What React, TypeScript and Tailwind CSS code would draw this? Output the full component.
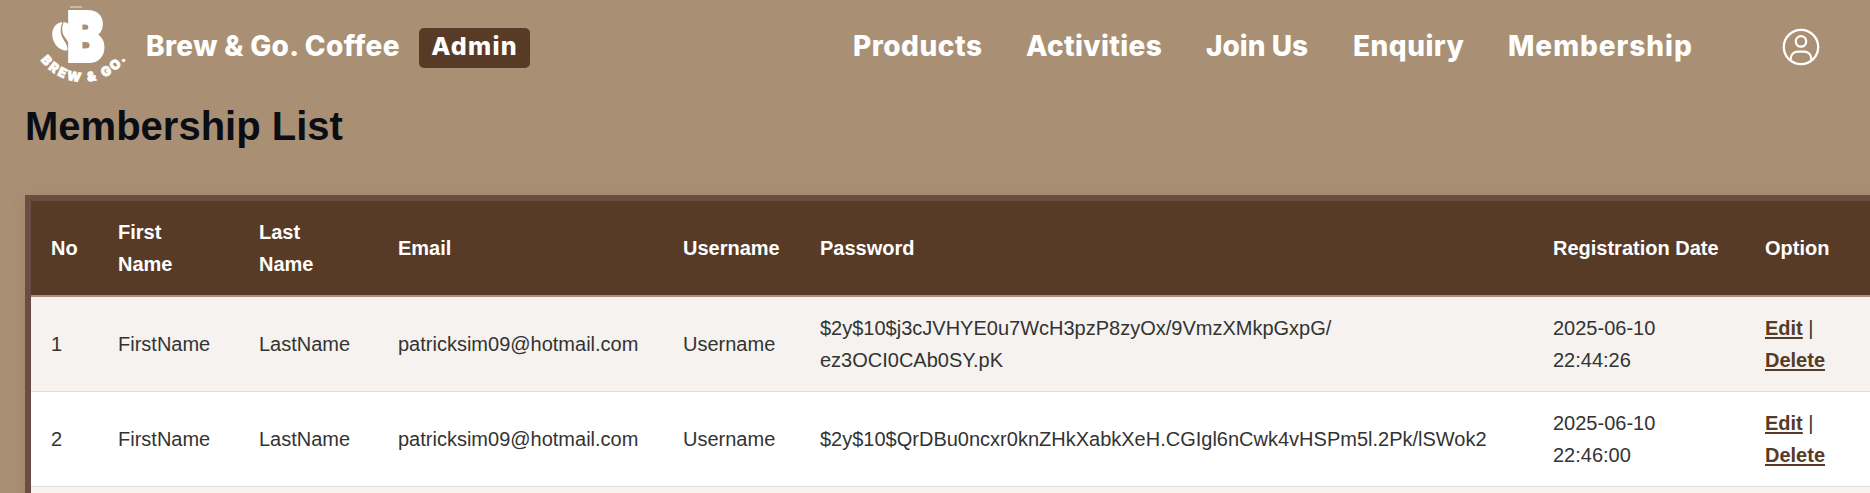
const navLinks = [
  { label: "Products", className: "w-[173px] tracking-[0.5px]" },
  { label: "Activities", className: "w-[180px] tracking-[0.35px]" },
  { label: "Join Us", className: "w-[147px]" },
  { label: "Enquiry", className: "w-[155px] tracking-[0.48px]" },
  { label: "Membership", className: "w-[272px] tracking-[0.95px]" },
];

const columns = [
  { label: "No", className: "w-[67px]" },
  { label: "First Name", className: "w-[141px] pr-12" },
  { label: "Last Name", className: "w-[139px] pr-12" },
  { label: "Email", className: "w-[285px]" },
  { label: "Username", className: "w-[137px]" },
  { label: "Password", className: "w-[733px]" },
  { label: "Registration Date", className: "w-[212px]" },
  { label: "Option", className: "w-[140px]" },
];

const members = [
  { no: 1, password: ["$2y$10$j3cJVHYE0u7WcH3pzP8zyOx/9VmzXMkpGxpG/", "ez3OCI0CAb0SY.pK"], time: "22:44:26" },
  { no: 2, password: ["$2y$10$QrDBu0ncxr0knZHkXabkXeH.CGIgl6nCwk4vHSPm5l.2Pk/lSWok2"], time: "22:46:00" },
];

function Logo() {
  return (
    <svg className="h-[92px] w-[110px] shrink-0" viewBox="30 0 110 92" fill="white" aria-label="Brew & Go">
      <text x="70" y="7.8" fontSize="2.4" fontWeight="600" textLength="12" opacity="0.75">
        SINCE 2020
      </text>
      <path d="M61.6 22.3 C55.5 23 52 29 52.2 35 C52.4 42.5 58.5 50.6 66.8 50.8 L67.6 48.5 C67 44.5 64.8 41.8 62.9 38.5 C60.2 33.8 59.8 27.5 62.6 22.2 Z" />
      <path d="M63.6 22.2 C61.2 28 62.2 33.3 64.6 36.8 C66.2 39.2 67.6 40.8 68.5 43.5 L68.5 24 C66.8 22.5 65.2 22 63.6 22.2 Z" />
      <text
        x="67.3"
        y="60.8"
        fontSize="67"
        fontWeight="900"
        stroke="white"
        strokeWidth="4"
        textLength="36.8"
        lengthAdjust="spacingAndGlyphs"
      >
        B
      </text>
      <path id="logo-arc" d="M40.5 60 A52 52 0 0 0 129.5 53" fill="none" />
      <text fontSize="13" fontWeight="900" stroke="white" strokeWidth="0.7">
        <textPath href="#logo-arc" textLength="100">
          BREW &amp; GO.
        </textPath>
      </text>
    </svg>
  );
}

function UserIcon() {
  return (
    <svg className="h-[38px] w-[38px]" viewBox="0 0 38 38" fill="none" stroke="white" strokeWidth="2.3">
      <circle cx="19" cy="19" r="17.2" />
      <circle cx="19" cy="13.4" r="5.2" />
      <path d="M8.6 32.5 V31 C8.9 26.2 12 23.6 16 23.6 H22 C26 23.6 29.1 26.2 29.4 31 V32.5" />
    </svg>
  );
}

function ActionLink({ children }: { children: string }) {
  return (
    <a href="#" className="font-bold text-[#573b26] underline decoration-2 underline-offset-2">
      {children}
    </a>
  );
}

export default function App() {
  return (
    <div className="h-screen overflow-hidden bg-[#a99074] font-['Liberation_Sans',Arial,sans-serif]">
      <header className="flex h-[92px] items-center pl-[30px] font-['Inter',sans-serif] text-[28px] font-extrabold whitespace-nowrap text-white">
        <Logo />
        <span className="ml-[6px] w-[273px] tracking-[0.36px]">Brew &amp; Go. Coffee</span>
        <span className="mt-1 flex h-10 w-[111px] items-center justify-center rounded-[5px] bg-[#573b26] pb-0.5 text-[25px] tracking-[1.2px]">
          Admin
        </span>
        <nav className="ml-[323px] flex">
          {navLinks.map((link) => (
            <a key={link.label} href="#" className={link.className}>
              {link.label}
            </a>
          ))}
        </nav>
        <a href="#" className="ml-[2px] pt-px" aria-label="Account">
          <UserIcon />
        </a>
      </header>

      <h1 className="mb-[39px] pt-1 pl-[25px] text-[40px] leading-[60px] font-bold text-[#0a0e14]">Membership List</h1>

      <div className="ml-[25px] w-[1880px] border-6 border-[#6d4c41] shadow-[0_4px_16px_rgba(88,58,38,0.12)]">
        <table className="w-[1854px] table-fixed border-separate border-spacing-0 bg-white text-xl leading-8 text-[#333333]">
          <thead>
            <tr className="bg-[#573b26] text-left text-white">
              {columns.map((column) => (
                <th key={column.label} className={`border-b-2 border-[#a99074] px-5 py-[15px] font-bold ${column.className}`}>
                  {column.label}
                </th>
              ))}
            </tr>
          </thead>
          <tbody className="[&_td]:h-[95px] [&_td]:border-b [&_td]:border-[#dddddd] [&_td]:px-5 [&_td]:py-[15px] [&_td]:align-middle">
            {members.map((member) => (
              <tr key={member.no} className="odd:bg-[#f5f2ef]">
                <td>{member.no}</td>
                <td>FirstName</td>
                <td>LastName</td>
                <td>patricksim09@hotmail.com</td>
                <td>Username</td>
                <td>
                  {member.password.map((line) => (
                    <div key={line}>{line}</div>
                  ))}
                </td>
                <td>
                  2025-06-10
                  <br />
                  {member.time}
                </td>
                <td>
                  <ActionLink>Edit</ActionLink> |<br />
                  <ActionLink>Delete</ActionLink>
                </td>
              </tr>
            ))}
            <tr className="bg-[#f5f2ef]">
              <td colSpan={8} />
            </tr>
          </tbody>
        </table>
      </div>
    </div>
  );
}
